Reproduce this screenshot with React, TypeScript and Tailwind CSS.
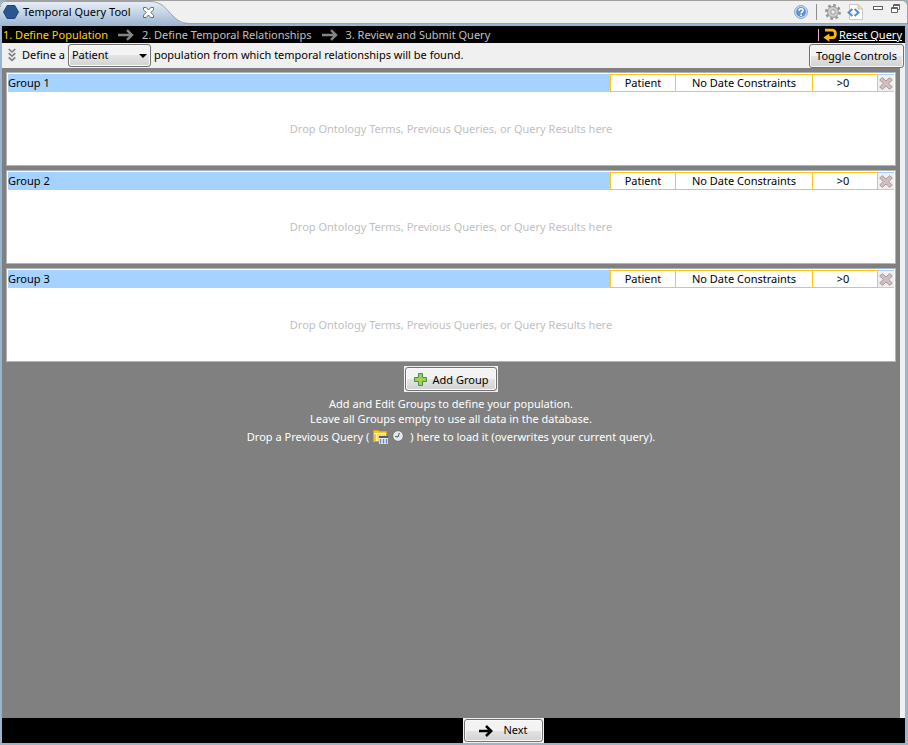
import React, { useState } from "react";

const raised =
  "border border-[#707070] bg-linear-to-b from-[#f3f3f3] from-50% via-[#e4e4e4] via-50% to-[#d2d2d2] shadow-[inset_0_0_0_1px_#fafafa]";

function StepArrow() {
  return (
    <svg viewBox="0 0 16 12" className="h-3 w-4 shrink-0" aria-hidden="true">
      <path d="M0 6H14M9 1.2L14 6L9 10.8" fill="none" stroke="#858585" strokeWidth="2.4" />
    </svg>
  );
}

function TabShape() {
  return (
    <svg viewBox="0 0 204 26" className="absolute top-0 left-0 h-[26px] w-[204px]" aria-hidden="true">
      <defs>
        <linearGradient id="tab" x1="0" y1="0" x2="0" y2="1">
          <stop offset="0" stopColor="#e9f0f8" />
          <stop offset="1" stopColor="#99b4d1" />
        </linearGradient>
      </defs>
      <path
        d="M0 25V5Q0.5 0.5 5 0.5H150C162 0.5 166 8 173 15C179 21 183 23.5 192 23.5H204V25Z"
        fill="url(#tab)"
      />
      <path
        d="M0.5 6Q0.5 0.5 6 0.5H150C162 0.5 166 8 173 15C179 21 183 22.5 192 22.5H204"
        fill="none"
        stroke="#a0a0a0"
      />
    </svg>
  );
}

function HexIcon() {
  return (
    <svg viewBox="0 0 16 14" className="h-3.5 w-4" aria-hidden="true">
      <path d="M4.2 0.5H11.8L15.5 7L11.8 13.5H4.2L0.5 7Z" fill="#2c5590" stroke="#1f467e" />
    </svg>
  );
}

function CloseIcon() {
  return (
    <svg viewBox="0 0 11 11" className="h-[11px] w-[11px]" aria-hidden="true">
      <path
        d="M0.5 0.5H3.2L5.5 3L7.8 0.5H10.5V2.8L7.8 5.5L10.5 8.2V10.5H7.8L5.5 8L3.2 10.5H0.5V8.2L3.2 5.5L0.5 2.8Z"
        fill="#fff"
        stroke="#6b6b6b"
      />
    </svg>
  );
}

function HelpIcon() {
  return (
    <svg viewBox="0 0 14 14" className="h-3.5 w-3.5" aria-hidden="true">
      <circle cx="7" cy="7" r="6.4" fill="#dce9f7" stroke="#7d9cc4" />
      <circle cx="7" cy="7" r="5" fill="#5f93cc" />
      <path d="M5 5.7C5 3.1 9.1 3.1 9.1 5.4C9.1 7 7.1 6.8 7.1 8.6" fill="none" stroke="#fff" strokeWidth="1.5" />
      <rect x="6.3" y="9.5" width="1.6" height="1.5" fill="#fff" />
    </svg>
  );
}

function GearIcon() {
  return (
    <svg viewBox="0 0 16 16" className="h-4 w-4" aria-hidden="true">
      <circle cx="8" cy="8" r="6.7" fill="none" stroke="#929292" strokeWidth="2.4" strokeDasharray="2.63 2.63" />
      <circle cx="8" cy="8" r="5.4" fill="#cfcfcf" stroke="#989898" />
      <circle cx="8" cy="8" r="2.3" fill="#efefef" stroke="#989898" />
    </svg>
  );
}

function CodePageIcon() {
  return (
    <svg viewBox="0 0 16 16" className="h-4 w-4" aria-hidden="true">
      <path d="M2.5 0.5H11L15.5 5V15.5H2.5Z" fill="#fdfdfd" stroke="#c9c9c9" />
      <path d="M11 0.5V5H15.5Z" fill="#efe1b4" stroke="#cfc7aa" />
      <path d="M5.4 5L1.6 8.5L5.4 12M7.6 5L11.4 8.5L7.6 12" fill="none" stroke="#4a90e2" strokeWidth="2" />
    </svg>
  );
}

function ResetIcon() {
  return (
    <svg viewBox="0 0 14 14" className="h-3.5 w-3.5" aria-hidden="true">
      <path d="M2 2.2H9.5Q12.4 2.4 12.4 5.9Q12.4 9.6 9.5 9.6H4" fill="none" stroke="#fdb515" strokeWidth="2.8" />
      <path d="M6.4 5.4V13.8L0.3 9.6Z" fill="#fdb515" />
    </svg>
  );
}

function Chevrons() {
  return (
    <svg viewBox="0 0 8 14" className="h-3.5 w-2 shrink-0" aria-hidden="true">
      <path
        d="M0.7 1L4 4L7.3 1M0.7 5.2L4 8.2L7.3 5.2M0.7 9.4L4 12.4L7.3 9.4"
        fill="none"
        stroke="#7c7c7c"
        strokeWidth="1.6"
      />
    </svg>
  );
}

function DeleteIcon() {
  return (
    <svg viewBox="0 0 14 13" className="h-[13px] w-3.5" aria-hidden="true">
      <path
        d="M3.4 0.6L7 4L10.6 0.6L13.3 3L9.7 6.5L13.3 10L10.6 12.4L7 9L3.4 12.4L0.7 10L4.3 6.5L0.7 3Z"
        fill="#d0bfbf"
        stroke="#a79b9b"
      />
    </svg>
  );
}

function PlusIcon() {
  return (
    <svg viewBox="0 0 13 13" className="h-[13px] w-[13px]" aria-hidden="true">
      <path
        d="M4.5 0.5H8.5V4.5H12.5V8.5H8.5V12.5H4.5V8.5H0.5V4.5H4.5Z"
        fill="#a5cf55"
        stroke="#3f9150"
      />
    </svg>
  );
}

function FolderIcon() {
  return (
    <svg viewBox="0 0 15 15" className="h-[15px] w-[15px]" aria-hidden="true">
      <path d="M0.5 1.5H5.5L6.5 2.5H13.5V12.5H0.5Z" fill="#fbdc5c" stroke="#e0a800" />
      <path d="M1 4.5H13M3.5 5V12" stroke="#fff3b0" />
      <path d="M1 3H13M2 5.5V12" stroke="#e5ae10" />
      <rect x="6" y="7" width="9" height="8" fill="#e8ecf8" />
      <rect x="6" y="7" width="9" height="2" fill="#3f5c9a" />
      <path d="M7.5 10V14.5M10.5 10V14.5M13.5 10V14.5" stroke="#6b82bb" strokeWidth="1.4" />
    </svg>
  );
}

function ClockIcon() {
  return (
    <svg viewBox="0 0 12 12" className="h-3 w-3" aria-hidden="true">
      <circle cx="6" cy="6" r="5.4" fill="#e4e7ea" stroke="#6e6e6e" />
      <path d="M3.2 6.4L6 7L7.4 3" fill="none" stroke="#3d4f78" />
    </svg>
  );
}

function NextArrow() {
  return (
    <svg viewBox="0 0 14 12" className="h-3 w-3.5" aria-hidden="true">
      <path d="M0 6H12M7 1L12.2 6L7 11" fill="none" stroke="#000" strokeWidth="2.5" />
    </svg>
  );
}

function Group({ name, onRemove }: { name: string; onRemove: () => void }) {
  return (
    <section aria-label={name} className="border border-[#b0b3b8] bg-white p-px">
      <header className="flex h-[18px] bg-[#a6d2ff]">
        <h2 className="flex-1 leading-[18px]">{name}</h2>
        <button className="w-[65px] border-y border-l border-[#ffc61a] bg-white leading-4">Patient</button>
        <button className="w-[137px] border-y border-l border-[#ffc61a] bg-white leading-4">
          No Date Constraints
        </button>
        <button className="w-[66px] border border-[#ffc61a] bg-white pr-1 leading-4">&gt;0</button>
        <button
          aria-label={`Remove ${name}`}
          onClick={onRemove}
          className="flex w-4 items-center justify-center border-y border-[#a6d2ff] bg-[#f0f0f0]"
        >
          <DeleteIcon />
        </button>
      </header>
      <p className="pt-7 pb-[26px] text-center leading-[18px] text-[#c0c0c0]">
        Drop Ontology Terms, Previous Queries, or Query Results here
      </p>
    </section>
  );
}

export default function App() {
  const [groups, setGroups] = useState([1, 2, 3]);
  const remove = (id: number) => setGroups(groups.filter((g) => g !== id));
  const add = () => setGroups([...groups, Math.max(0, ...groups) + 1]);

  return (
    <div className="flex min-h-screen flex-col bg-[#99b4d1] font-['Noto_Sans','Open_Sans',sans-serif] text-[11px] text-black">
      <div className="relative flex h-6 items-center rounded-t-md border-t border-r border-b border-[#a0a0a0] bg-[#f0f0f0] pr-[7px]">
        <TabShape />
        <div className="relative flex items-center pl-[3px]">
          <HexIcon />
          <span className="ml-1">Temporal Query Tool</span>
          <button aria-label="Close tab" className="ml-3">
            <CloseIcon />
          </button>
        </div>
        <div className="ml-auto flex items-center">
          <button aria-label="Help">
            <HelpIcon />
          </button>
          <span className="mx-2 h-4 w-px bg-[#8c8c8c]" />
          <button aria-label="Settings">
            <GearIcon />
          </button>
          <button aria-label="Source" className="ml-1.5">
            <CodePageIcon />
          </button>
          <button aria-label="Minimize" className="ml-2.5 self-start pt-[2px]">
            <svg viewBox="0 0 10 4" className="h-1 w-2.5" aria-hidden="true">
              <rect x="0.5" y="0.5" width="9" height="3" fill="#fff" stroke="#606060" />
            </svg>
          </button>
          <button aria-label="Restore" className="ml-2 self-start">
            <svg viewBox="0 0 9 9" className="h-[9px] w-[9px]" aria-hidden="true">
              <path d="M2.5 0.5H8.5V5.5H2.5ZM2.5 1.5H8.5" fill="#fff" stroke="#606060" />
              <path d="M0.5 3.5H6.5V8.5H0.5ZM0.5 4.5H6.5" fill="#fff" stroke="#606060" />
            </svg>
          </button>
        </div>
      </div>

      <div className="mt-0.5 mr-[3px] mb-0.5 ml-0.5 flex flex-1 flex-col bg-[#f0f0f0]">
        <nav className="flex h-[17px] items-center bg-black pl-px leading-[17px] text-[#c0c0c0]">
          <span className="text-[#ffcf1a]">1. Define Population</span>
          <span className="mr-2 ml-2.5">
            <StepArrow />
          </span>
          <span>2. Define Temporal Relationships</span>
          <span className="mr-2 ml-2.5">
            <StepArrow />
          </span>
          <span>3. Review and Submit Query</span>
          <span className="ml-auto h-3 w-px bg-[#f0a8d0]" />
          <button className="ml-1 flex items-center gap-0.5 pr-[3px] text-white">
            <ResetIcon />
            <span className="underline">Reset Query</span>
          </button>
        </nav>

        <div className="flex h-[25px] items-start pl-1.5">
          <div className="flex h-6 items-center">
            <Chevrons />
            <label htmlFor="unit" className="ml-1.5">
              Define a
            </label>
            <div className="relative mx-[3px] flex">
              <select
                id="unit"
                className={`h-[23px] w-[83px] appearance-none rounded-[3px] pl-[3px] ${raised}`}
              >
                <option>Patient</option>
                <option>Visit</option>
              </select>
              <svg viewBox="0 0 8 4" className="pointer-events-none absolute top-[10px] right-1 h-1 w-2" aria-hidden="true">
                <path d="M0 0H8L4 4Z" fill="#000" />
              </svg>
            </div>
            <span>population from which temporal relationships will be found.</span>
          </div>
          <button className={`mt-px mr-px ml-auto h-6 w-[95px] rounded-[3px] leading-5 whitespace-nowrap ${raised}`}>
            Toggle Controls
          </button>
        </div>

        <main className="mr-[5px] flex flex-1 flex-col bg-[#808080] px-1 pt-1">
          <div className="flex flex-col gap-1">
            {groups.map((id) => (
              <Group key={id} name={`Group ${id}`} onRemove={() => remove(id)} />
            ))}
          </div>
          <div className="flex flex-col items-center pt-1 text-center leading-[15px] text-white">
            <div className="bg-[#f0f0f0] p-px">
              <button
                onClick={add}
                className={`flex h-6 w-[92px] items-center justify-center gap-1.5 rounded-[3px] whitespace-nowrap text-black ${raised}`}
              >
                <PlusIcon />
                Add Group
              </button>
            </div>
            <p className="mt-1">Add and Edit Groups to define your population.</p>
            <p>Leave all Groups empty to use all data in the database.</p>
            <p className="mt-0.5 flex h-4 items-center">
              <span>Drop a Previous Query (</span>
              <span className="mx-1">
                <FolderIcon />
              </span>
              <span className="mr-1.5">
                <ClockIcon />
              </span>
              <span>) here to load it (overwrites your current query).</span>
            </p>
          </div>
        </main>

        <footer className="flex h-[25px] justify-center bg-black pl-[100px]">
          <div className="bg-[#f0f0f0] p-px">
            <button className={`flex h-[23px] w-[79px] items-center justify-center gap-2.5 rounded-[3px] ${raised}`}>
              <NextArrow />
              Next
            </button>
          </div>
        </footer>
      </div>
    </div>
  );
}
